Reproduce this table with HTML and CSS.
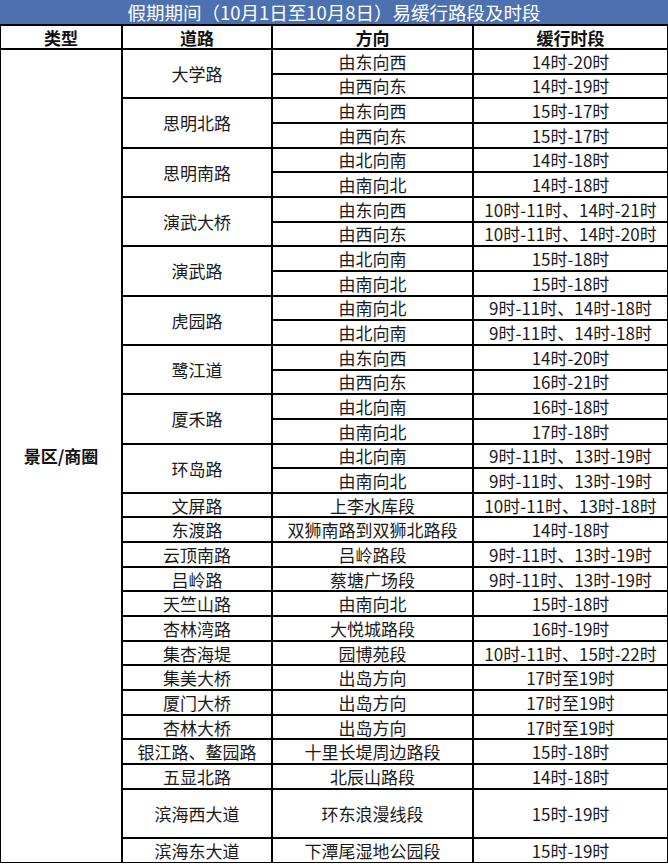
FILE: index.html
```html
<!DOCTYPE html>
<html lang="zh-CN">
<head>
<meta charset="utf-8">
<title>假期期间易缓行路段及时段</title>
<link rel="stylesheet" href="styles.css">
</head>
<body>
<div class="sheet">
  <div class="title">假期期间（10月1日至10月8日）易缓行路段及时段</div>
  <div class="cell head">类型</div>
  <div class="cell head">道路</div>
  <div class="cell head">方向</div>
  <div class="cell head">缓行时段</div>

  <div class="cell head area">景区/商圈</div>

  <div class="cell span2">大学路</div>
  <div class="cell">由东向西</div><div class="cell">14时-20时</div>
  <div class="cell">由西向东</div><div class="cell">14时-19时</div>

  <div class="cell span2">思明北路</div>
  <div class="cell">由东向西</div><div class="cell">15时-17时</div>
  <div class="cell">由西向东</div><div class="cell">15时-17时</div>

  <div class="cell span2">思明南路</div>
  <div class="cell">由北向南</div><div class="cell">14时-18时</div>
  <div class="cell">由南向北</div><div class="cell">14时-18时</div>

  <div class="cell span2">演武大桥</div>
  <div class="cell">由东向西</div><div class="cell">10时-11时、14时-21时</div>
  <div class="cell">由西向东</div><div class="cell">10时-11时、14时-20时</div>

  <div class="cell span2">演武路</div>
  <div class="cell">由北向南</div><div class="cell">15时-18时</div>
  <div class="cell">由南向北</div><div class="cell">15时-18时</div>

  <div class="cell span2">虎园路</div>
  <div class="cell">由南向北</div><div class="cell">9时-11时、14时-18时</div>
  <div class="cell">由北向南</div><div class="cell">9时-11时、14时-18时</div>

  <div class="cell span2">鹭江道</div>
  <div class="cell">由东向西</div><div class="cell">14时-20时</div>
  <div class="cell">由西向东</div><div class="cell">16时-21时</div>

  <div class="cell span2">厦禾路</div>
  <div class="cell">由北向南</div><div class="cell">16时-18时</div>
  <div class="cell">由南向北</div><div class="cell">17时-18时</div>

  <div class="cell span2">环岛路</div>
  <div class="cell">由北向南</div><div class="cell">9时-11时、13时-19时</div>
  <div class="cell">由南向北</div><div class="cell">9时-11时、13时-19时</div>

  <div class="cell">文屏路</div><div class="cell">上李水库段</div><div class="cell">10时-11时、13时-18时</div>
  <div class="cell">东渡路</div><div class="cell">双狮南路到双狮北路段</div><div class="cell">14时-18时</div>
  <div class="cell">云顶南路</div><div class="cell">吕岭路段</div><div class="cell">9时-11时、13时-19时</div>
  <div class="cell">吕岭路</div><div class="cell">蔡塘广场段</div><div class="cell">9时-11时、13时-19时</div>
  <div class="cell">天竺山路</div><div class="cell">由南向北</div><div class="cell">15时-18时</div>
  <div class="cell">杏林湾路</div><div class="cell">大悦城路段</div><div class="cell">16时-19时</div>
  <div class="cell">集杏海堤</div><div class="cell">园博苑段</div><div class="cell">10时-11时、15时-22时</div>
  <div class="cell">集美大桥</div><div class="cell">出岛方向</div><div class="cell">17时至19时</div>
  <div class="cell">厦门大桥</div><div class="cell">出岛方向</div><div class="cell">17时至19时</div>
  <div class="cell">杏林大桥</div><div class="cell">出岛方向</div><div class="cell">17时至19时</div>
  <div class="cell">银江路、鳌园路</div><div class="cell">十里长堤周边路段</div><div class="cell">15时-18时</div>
  <div class="cell">五显北路</div><div class="cell">北辰山路段</div><div class="cell">14时-18时</div>

  <div class="cell span2">滨海西大道</div><div class="cell span2">环东浪漫线段</div><div class="cell span2">15时-19时</div>
  <div class="cell">滨海东大道</div><div class="cell">下潭尾湿地公园段</div><div class="cell">15时-19时</div>
</div>
</body>
</html>
```
FILE: styles.css
```css
html, body {
  margin: 0;
  padding: 0;
  background: #ffffff;
}

body {
  font-family: "Noto Sans CJK SC", "Noto Sans", sans-serif;
  color: #1a1a1a;
}

.sheet {
  width: 668px;
  box-sizing: border-box;
  display: grid;
  grid-template-columns: 120px 148px 199px 193px;
  grid-template-rows: 24px 22px repeat(33, 22.67px);
  gap: 2px;
  padding: 0 1px 1px 1px;
  background: #000000;
}

.title {
  grid-column: 1 / -1;
  background: #4d71b0;
  color: #ffffff;
  font-size: 18.5px;
  line-height: 1;
  display: flex;
  align-items: center;
  justify-content: center;
  margin: 0 -1px;
}

.cell {
  background: #ffffff;
  font-size: 17px;
  line-height: 1;
  display: flex;
  align-items: center;
  justify-content: center;
  white-space: nowrap;
}

.head {
  font-weight: 700;
  color: #111111;
}

.area {
  grid-row: span 33;
}

.span2 {
  grid-row: span 2;
}
```
